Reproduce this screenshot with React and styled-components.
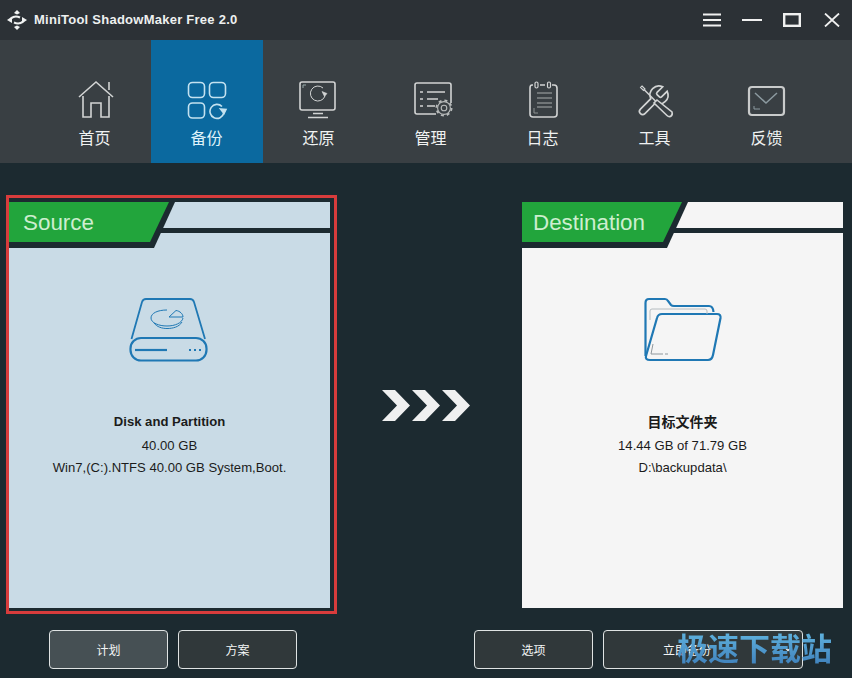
import React from "react";
import styled, { createGlobalStyle } from "styled-components";

const Global = createGlobalStyle`
  html, body { margin: 0; padding: 0; background: #1c2a30; }
  body { width: 852px; height: 678px; overflow: hidden; font-family: "Liberation Sans", "Noto Sans CJK SC", sans-serif; }
`;
const Window = styled.div`
  position: relative; width: 852px; height: 678px; background: #1c2a30; overflow: hidden;
  display: flex; flex-direction: column;
`;
const TitleBar = styled.header`
  height: 40px; background: #2c3136; display: flex; align-items: center; padding-left: 7px; flex: none;
`;
const Title = styled.div`
  margin-left: 7px; font: bold 13px/16px "Liberation Sans", sans-serif; color: #eef0f0; flex: 1; letter-spacing: 0.25px;
`;
const Ctrl = styled.button`
  width: 40px; height: 40px; padding: 0; border: 0; background: transparent; display: flex; align-items: center; justify-content: center;
`;
const Nav = styled.nav`
  height: 123px; flex: none; background: #393f43; display: flex; padding-left: 39px;
`;
const NavItem = styled.div`
  width: 112px; display: flex; flex-direction: column; align-items: center; padding-top: 40px; box-sizing: border-box;
  background: ${p => (p.$active ? "#0b699f" : "transparent")};
  color: ${p => (p.$active ? "#dff2fa" : "#f0f2f2")};
`;
const NavIcon = styled.svg`
  width: 44px; height: 40px; display: block; fill: none; stroke: ${p => p.$c || "#d2d4d4"}; stroke-width: 1.6;
`;
const NavLabel = styled.span`
  margin-top: 5px; margin-right: 1px; font: 400 16px/24px "Noto Sans CJK SC", sans-serif;
`;
const Main = styled.main`
  display: flex; padding: 32px 0 0 6px; flex: none;
`;
const Frame = styled.div`
  width: 331px; box-sizing: border-box; border: 3px solid #d83c3c; padding: 4px 4px 3px 0;
`;
const Panel = styled.section`
  width: 321px; height: 406px; display: flex; flex-direction: column; align-items: stretch; flex: none;
  background: ${p => p.$bg}; margin-top: ${p => p.$top || 0}px;
`;
const Head = styled.div`
  height: 46px; flex: none;
  background: linear-gradient(to bottom, transparent 26px, #1c2a30 26px, #1c2a30 31px, transparent 31px);
`;
const TabShadow = styled.div`
  width: 166px; height: 46px; background: #1c2a30;
  clip-path: polygon(0 0, 166px 0, 145px 46px, 0 46px);
`;
const Tab = styled.div`
  height: 40px; background: #22a53c; color: #cdeecf; font: 400 22.4px/42px "Liberation Sans", sans-serif; padding-left: ${p => p.$pad}px;
  clip-path: polygon(0 0, 160px 0, 141px 40px, 0 40px);
`;
const Body = styled.div`
  display: flex; flex-direction: column; align-items: center; padding-top: ${p => p.$top}px; color: #1b1b1b;
`;
const Glyph = styled.svg`
  display: block; fill: none; stroke: #1f78b4; stroke-width: 2.2; margin-bottom: ${p => p.$mb}px; flex: none;
  transform: translateX(${p => p.$dx || 0}px);
`;
const Name = styled.div`
  font: bold ${p => p.$size || 13.1}px/22px "Liberation Sans", "Noto Sans CJK SC", sans-serif; margin-bottom: 2px;
`;
const Line = styled.div`
  font: 400 13.1px/22px "Liberation Sans", sans-serif;
`;
const Middle = styled.div`
  width: 185px; flex: none; display: flex; align-items: center; padding: 2px 0 0 45px; box-sizing: border-box;
`;
const Actions = styled.div`
  display: flex; gap: 10px; padding: 16px 0 0 49px;
`;
const Btn = styled.button`
  position: relative; width: ${p => p.$w || 119}px; height: 39px; box-sizing: border-box; border: 1px solid #dfe3e3; border-radius: 4px;
  padding: 0 ${p => p.$pr || 0}px 0 0;
  margin-left: ${p => p.$ml || 0}px;
  background: ${p => (p.$on ? "#465054" : "#30383a")}; color: #f4f6f6;
  font: 400 12px/16px "Noto Sans CJK SC", sans-serif;
`;
const Caret = styled.svg`
  position: absolute; right: 10px; top: 15px; fill: none; stroke: #f0f2f2; stroke-width: 1.3;
`;
const Watermark = styled.div`
  position: absolute; left: 677px; top: 628px; font: 700 31px/38px "Noto Sans CJK SC", sans-serif;
  background: linear-gradient(to bottom, #63b8e2, #3f80bb); -webkit-background-clip: text; background-clip: text; color: transparent;
  white-space: nowrap;
`;

const Logo = () => (
  <svg width="20" height="20" viewBox="0 0 20 20" fill="#f0f2f2">
    <path d="M10 0 L13 3 L10 4.5 L7 3 Z" />
    <path d="M10 20 L7 17 L10 15.5 L13 17 Z" />
    <path d="M0 10 L5 6.5 V13 Z" />
    <path d="M20 10 L15 7 V13.5 Z" />
    <path d="M4 8.5C6.5 6.2 9.5 5.8 13 7.5M16 11.5C13.5 13.8 10.5 14.2 7 12.5" fill="none" stroke="#f0f2f2" strokeWidth="2" />
  </svg>
);
const Ctrls = () => (
  <>
    <Ctrl aria-label="menu"><svg width="18" height="14" viewBox="0 0 18 14" stroke="#f0f0f0" strokeWidth="2"><path d="M0 1.5H18M0 7H18M0 12.5H18" /></svg></Ctrl>
    <Ctrl aria-label="min"><svg width="20" height="4" viewBox="0 0 20 4" stroke="#f0f0f0" strokeWidth="2"><path d="M0 2H20" /></svg></Ctrl>
    <Ctrl aria-label="max"><svg width="18" height="14" viewBox="0 0 18 14" fill="none" stroke="#f0f0f0" strokeWidth="2.4"><rect x="1.2" y="1.2" width="15.6" height="11.6" /></svg></Ctrl>
    <Ctrl aria-label="close"><svg width="16" height="14" viewBox="0 0 16 14" stroke="#f0f0f0" strokeWidth="1.8"><path d="M1 0.5L15 13.5M15 0.5L1 13.5" /></svg></Ctrl>
  </>
);

const icons = {
  home: (
    <NavIcon viewBox="0 0 44 40">
      <path d="M6 17L23 2L40 17" /><path d="M36 2V10" />
      <path d="M10 16V37H18V23H28V37H36V16" />
    </NavIcon>
  ),
  backup: (
    <NavIcon viewBox="0 0 44 40" $c="#c4e2f0">
      <rect x="3.5" y="2.5" width="16" height="15" rx="4" /><rect x="24.5" y="2.5" width="16" height="15" rx="4" />
      <rect x="3.5" y="23" width="16" height="15" rx="4" />
      <path d="M37 26.5A7 7 0 1 0 38.8 33" /><path d="M35.5 29L41 29.5L39 33.5Z" fill="#c4e2f0" />
    </NavIcon>
  ),
  restore: (
    <NavIcon viewBox="0 0 44 40">
      <rect x="3" y="2" width="35" height="28" rx="2" />
      <path d="M16 33.5H26M11 37.5H31" /><path d="M6 8V5H9" strokeWidth="1" stroke="#9aa" />
      <path d="M26 8A7.5 7.5 0 1 0 28 16" strokeWidth="1" /><path d="M25 11.5L30 13.5L27.5 16.5Z" fill="#d2d4d4" strokeWidth="0.6" />
    </NavIcon>
  ),
  manage: (
    <NavIcon viewBox="0 0 44 40">
      <path d="M42 23V5Q42 3 40 3H8Q6 3 6 5V32Q6 34 8 34H27" />
      <path d="M11 12H14M18 12H36M11 19H14M18 19H29M11 26H14M18 26H26" strokeWidth="1.4" />
      <g stroke="#b9bcbc" strokeWidth="1.1">
        <circle cx="35" cy="28" r="6.4" /><circle cx="35" cy="28" r="2.8" />
        <circle cx="35" cy="28" r="7.6" strokeWidth="1.8" strokeDasharray="3 3" />
      </g>
    </NavIcon>
  ),
  log: (
    <NavIcon viewBox="0 0 44 40">
      <path d="M12 5H11Q9 5 9 8V34Q9 37 12 37H33Q36 37 36 34V8Q36 5 33 5H31M19 5H24" />
      <rect x="14" y="2" width="3" height="6" rx="1.5" strokeWidth="1.2" /><rect x="26.5" y="2" width="3" height="6" rx="1.5" strokeWidth="1.2" />
      <path d="M16 13H31M16 18H31M16 23H31M16 27H31" strokeWidth="1" stroke="#a9adad" />
      <path d="M13 28V33H17" strokeWidth="1" stroke="#8d9292" />
    </NavIcon>
  ),
  tools: (
    <NavIcon viewBox="0 0 44 40">
      <path d="M9 6L12 9L10.5 10.5L7.5 7.5Z" strokeWidth="1.1" />
      <path d="M11 9.5L24 22.5" strokeWidth="1.5" />
      <g transform="translate(2 3) scale(1.5)" strokeWidth="1.1">
        <path d="M14.7 6.3a1 1 0 0 0 0 1.4l1.6 1.6a1 1 0 0 0 1.4 0l3.77-3.77a6 6 0 0 1-7.94 7.94l-6.91 6.91a2.12 2.12 0 0 1-3-3l6.91-6.91a6 6 0 0 1 7.94-7.94l-3.76 3.76z" />
      </g>
      <path d="M24 20L39 32Q40 35 37.5 36.5Q35.5 37 34 35.5L21 23Z" fill="#393f43" />
    </NavIcon>
  ),
  mail: (
    <NavIcon viewBox="0 0 44 40" $c="#c9cbcb">
      <rect x="4" y="7" width="35" height="28" rx="3" strokeWidth="2.2" />
      <path d="M10 13L21 23L32 13" stroke="#8c9aa0" strokeWidth="1.5" />
      <path d="M9 26V29H15" stroke="#8c9aa0" strokeWidth="1" />
    </NavIcon>
  ),
};
const navItems = [["home", "首页"], ["backup", "备份", true], ["restore", "还原"], ["manage", "管理"], ["log", "日志"], ["tools", "工具"], ["mail", "反馈"]];

const Disk = () => (
  <Glyph $mb={49} width="80" height="65" viewBox="0 0 80 65" $dx={-1}>
    <path d="M2.5 42L13 5Q14 2 17 2H61Q64 2 65 5L76 42" strokeWidth="1.8" />
    <rect x="1.5" y="41" width="76" height="22.5" rx="10.5" />
    <path d="M6 53H38" />
    <path d="M60 53H62M65 53H67M70 53H72" />
    <g strokeWidth="1">
      <path d="M38 13C29 13 22 16 22 21C22 26 30 29 38 29C46 29 53 26 54 21" />
      <path d="M25 26C28 30 33 31.5 38 31.5C44 31.5 50 30 53 25" />
      <path d="M40 20L47 13.5C51 14 54 17 54 20Z" />
    </g>
  </Glyph>
);
const Folder = () => (
  <Glyph $mb={49} width="82" height="66" viewBox="0 0 82 66">
    <path d="M3.5 60V7Q3.5 3 7 3H23Q25 3 26 5L29 9Q30 10 32 10H67Q71 10 71.5 16" />
    <path d="M20 18H75Q79 18 78.5 22L71 59Q70 64 66 64H8Q3 64 4 60L15 22Q16 18 20 18Z" />
    <path d="M8 24V15Q8 13 10 13H63Q65 13 65 15V18" stroke="#b5bcc0" strokeWidth="1" />
    <path d="M11 48L9 58H21M23 58H26" stroke="#8f979c" strokeWidth="1" />
  </Glyph>
);
const Arrows = () => (
  <svg width="88" height="31" viewBox="0 0 88 31" fill="#eff0f0">
    <path d="M0 0H13L28 15.5L13 31H0L15 15.5Z" />
    <path d="M30 0H43L58 15.5L43 31H30L45 15.5Z" />
    <path d="M60 0H73L88 15.5L73 31H60L75 15.5Z" />
  </svg>
);

export default function App() {
  return (
    <Window>
      <Global />
      <TitleBar>
        <Logo />
        <Title>MiniTool ShadowMaker Free 2.0</Title>
        <Ctrls />
      </TitleBar>
      <Nav>
        {navItems.map(([k, l, a]) => (
          <NavItem key={k} $active={a}>
            {icons[k]}
            <NavLabel>{l}</NavLabel>
          </NavItem>
        ))}
      </Nav>
      <Main>
        <Frame>
          <Panel $bg="#c9dbe6">
            <Head><TabShadow><Tab $pad={14}>Source</Tab></TabShadow></Head>
            <Body $top={49}>
              <Disk />
              <Name>Disk and Partition</Name>
              <Line>40.00 GB</Line>
              <Line>Win7,(C:).NTFS 40.00 GB System,Boot.</Line>
            </Body>
          </Panel>
        </Frame>
        <Middle><Arrows /></Middle>
        <Panel $bg="#f5f5f5" $top={7}>
          <Head><TabShadow><Tab $pad={11}>Destination</Tab></TabShadow></Head>
          <Body $top={48}>
            <Folder />
            <Name $size={14}>目标文件夹</Name>
            <Line>14.44 GB of 71.79 GB</Line>
            <Line>D:\backupdata\</Line>
          </Body>
        </Panel>
      </Main>
      <Actions>
        <Btn $on>计划</Btn>
        <Btn>方案</Btn>
        <Btn $ml={167}>选项</Btn>
        <Btn $w={200} $pr={32}>
          立即备份
          <Caret width="8" height="6" viewBox="0 0 8 6"><path d="M0.5 1L4 4.5L7.5 1" /></Caret>
        </Btn>
      </Actions>
      <Watermark>极速下载站</Watermark>
    </Window>
  );
}
